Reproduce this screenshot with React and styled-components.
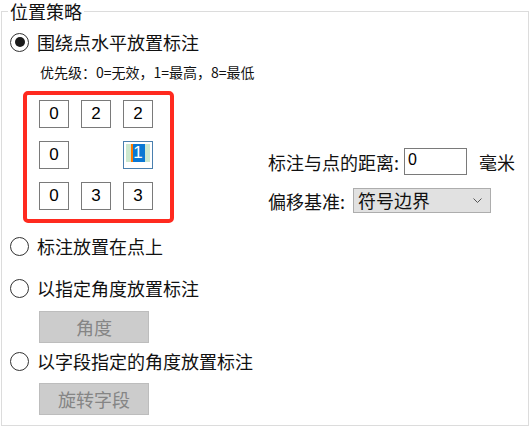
import styled, { createGlobalStyle } from 'styled-components';

const GlobalStyle = createGlobalStyle`
  html, body {
    margin: 0;
    padding: 0;
    background: #ffffff;
  }
  body {
    font-family: "Noto Sans CJK SC", "Noto Sans", sans-serif;
    color: #111111;
  }
`;

const Group = styled.fieldset`
  margin: 0 0 0 1px;
  width: 528px;
  box-sizing: border-box;
  padding: 0 0 10px 0;
  border: 1px solid #dcdcdc;
  display: flex;
  flex-direction: column;
  align-items: flex-start;
`;

const Legend = styled.legend`
  margin-left: 6px;
  padding: 0 2px;
  font-size: 18px;
  line-height: 22px;
  color: #111111;
`;

const RadioRow = styled.div`
  display: flex;
  align-items: center;
  height: 24px;
  margin-top: ${(p) => p.$top}px;
  margin-left: 8px;
  gap: 8px;
  font-size: 18px;
  line-height: 24px;
`;

const RadioCircle = styled.span`
  width: 19px;
  height: 19px;
  box-sizing: border-box;
  border: 1.5px solid #333333;
  border-radius: 50%;
  display: flex;
  align-items: center;
  justify-content: center;

  &::after {
    content: '';
    width: 10px;
    height: 10px;
    border-radius: 50%;
    background: #1a1a1a;
    display: ${(p) => (p.$checked ? 'block' : 'none')};
  }
`;

const Hint = styled.div`
  margin-top: 8px;
  margin-left: 38px;
  font-size: 14px;
  line-height: 20px;
  height: 20px;
`;

const Middle = styled.div`
  display: flex;
  align-items: flex-end;
  margin-top: 9px;
  margin-left: 21px;
`;

const PriorityBox = styled.div`
  width: 151px;
  height: 132px;
  box-sizing: border-box;
  border: 4px solid #ff2a1f;
  border-radius: 5px;
  padding: 5px 0 0 12px;
  display: grid;
  grid-template-columns: repeat(3, 30px);
  grid-auto-rows: 28px;
  column-gap: 12px;
  row-gap: 13px;
  align-content: start;
`;

const Cell = styled.div`
  box-sizing: border-box;
  border: 1px solid ${(p) => (p.$active ? '#4a7fae' : '#7a7a7a')};
  display: flex;
  justify-content: center;
  align-items: ${(p) => (p.$active ? 'flex-start' : 'center')};
  padding-top: ${(p) => (p.$active ? '2px' : '0')};
  font-family: "Liberation Sans", Arial, sans-serif;
  font-size: 17px;
  line-height: 20px;
  color: #000000;
`;

const EmptyCell = styled.div``;

const Highlight = styled.span`
  width: 24px;
  height: 18px;
  background: #cce8cf;
  display: flex;
  justify-content: center;
`;

const Selected = styled.span`
  background: #0a78d4;
  color: #ffffff;
  border-left: 2px solid #ff7a00;
  padding: 0 2px 0 0;
  font-size: 17px;
  line-height: 18px;
`;

const Panel = styled.div`
  margin-left: 94px;
  margin-bottom: 10px;
  display: flex;
  flex-direction: column;
  gap: 13px;
`;

const Field = styled.div`
  display: flex;
  align-items: center;
  font-size: 18px;
  line-height: 24px;
`;

const Label = styled.span`
  margin-right: ${(p) => p.$gap}px;
`;

const TextBox = styled.div`
  width: 63px;
  height: 27px;
  box-sizing: border-box;
  border: 1px solid #7a7a7a;
  padding: 2px 0 0 3px;
  font-family: "Liberation Sans", Arial, sans-serif;
  font-size: 16px;
  line-height: 18px;
  color: #000000;
`;

const Unit = styled.span`
  margin-left: 12px;
`;

const Select = styled.div`
  width: 138px;
  height: 25px;
  box-sizing: border-box;
  border: 1px solid #adadad;
  background: #e1e1e1;
  display: flex;
  align-items: center;
  justify-content: space-between;
  padding: 0 8px 0 4px;
  font-size: 18px;
  line-height: 23px;
`;

const Button = styled.div`
  margin-top: ${(p) => p.$top}px;
  margin-left: 37px;
  width: 110px;
  height: 32px;
  box-sizing: border-box;
  border: 1px solid #bdbdbd;
  background: #cccccc;
  color: #858585;
  font-size: 18px;
  display: flex;
  align-items: center;
  justify-content: center;
`;

const Chevron = () => (
  <svg width="9" height="5" viewBox="0 0 9 5">
    <path d="M0.5 0.5 L4.5 4.5 L8.5 0.5" fill="none" stroke="#555555" strokeWidth="1" />
  </svg>
);

const grid = ['0', '2', '2', '0', null, 'sel', '0', '3', '3'];

export default function App() {
  return (
    <>
      <GlobalStyle />
      <Group>
        <Legend>位置策略</Legend>
        <RadioRow $top={8}>
          <RadioCircle $checked />
          <span>围绕点水平放置标注</span>
        </RadioRow>
        <Hint>优先级：0=无效，1=最高，8=最低</Hint>
        <Middle>
          <PriorityBox>
            {grid.map((v, i) => {
              if (v === null) return <EmptyCell key={i} />;
              if (v === 'sel') {
                return (
                  <Cell key={i} $active>
                    <Highlight>
                      <Selected>1</Selected>
                    </Highlight>
                  </Cell>
                );
              }
              return <Cell key={i}>{v}</Cell>;
            })}
          </PriorityBox>
          <Panel>
            <Field>
              <Label $gap={5}>标注与点的距离:</Label>
              <TextBox>0</TextBox>
              <Unit>毫米</Unit>
            </Field>
            <Field>
              <Label $gap={8}>偏移基准:</Label>
              <Select>
                <span>符号边界</span>
                <Chevron />
              </Select>
            </Field>
          </Panel>
        </Middle>
        <RadioRow $top={11}>
          <RadioCircle />
          <span>标注放置在点上</span>
        </RadioRow>
        <RadioRow $top={18}>
          <RadioCircle />
          <span>以指定角度放置标注</span>
        </RadioRow>
        <Button $top={11}>角度</Button>
        <RadioRow $top={6}>
          <RadioCircle />
          <span>以字段指定的角度放置标注</span>
        </RadioRow>
        <Button $top={10}>旋转字段</Button>
      </Group>
    </>
  );
}
